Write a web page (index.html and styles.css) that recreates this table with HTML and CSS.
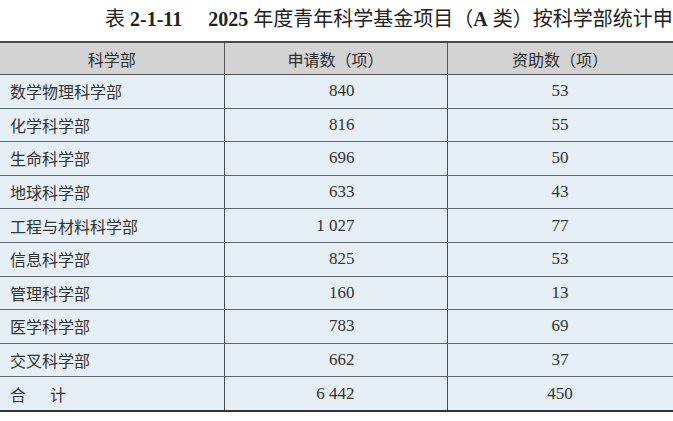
FILE: index.html
```html
<!DOCTYPE html>
<html lang="zh">
<head>
<meta charset="utf-8">
<title>表 2-1-11</title>
<link rel="stylesheet" href="styles.css">
</head>
<body>
<div class="page">
  <div class="title">表 <b>2-1-11</b><span class="gap"></span><b>2025</b> 年度青年科学基金项目（<b>A</b> 类）按科学部统计申请与资助情况</div>
  <table class="data">
    <colgroup><col class="c1"><col class="c2"><col class="c3"></colgroup>
    <thead>
      <tr><th>科学部</th><th>申请数（项）</th><th>资助数（项）</th></tr>
    </thead>
    <tbody>
      <tr><td class="name">数学物理科学部</td><td class="num">840</td><td class="fund">53</td></tr>
      <tr><td class="name">化学科学部</td><td class="num">816</td><td class="fund">55</td></tr>
      <tr><td class="name">生命科学部</td><td class="num">696</td><td class="fund">50</td></tr>
      <tr><td class="name">地球科学部</td><td class="num">633</td><td class="fund">43</td></tr>
      <tr><td class="name">工程与材料科学部</td><td class="num">1 027</td><td class="fund">77</td></tr>
      <tr><td class="name">信息科学部</td><td class="num">825</td><td class="fund">53</td></tr>
      <tr><td class="name">管理科学部</td><td class="num">160</td><td class="fund">13</td></tr>
      <tr><td class="name">医学科学部</td><td class="num">783</td><td class="fund">69</td></tr>
      <tr><td class="name">交叉科学部</td><td class="num">662</td><td class="fund">37</td></tr>
      <tr class="total"><td class="name">合<span class="sp"></span>计</td><td class="num">6 442</td><td class="fund">450</td></tr>
    </tbody>
  </table>
</div>
</body>
</html>
```
FILE: styles.css
```css
html, body {
  margin: 0;
  padding: 0;
  background: #ffffff;
}
.page {
  width: 673px;
  height: 421px;
  overflow: hidden;
  font-family: "Noto Sans CJK SC", sans-serif;
  color: #2a2a2a;
}
.title {
  height: 41px;
  box-sizing: border-box;
  padding: 6px 0 0 105px;
  font-size: 20px;
  line-height: 26px;
  white-space: nowrap;
  overflow: hidden;
  color: #222;
  font-family: "Liberation Serif", "Noto Sans CJK SC", serif;
}
.title b {
  font-family: "Liberation Serif", serif;
  font-weight: bold;
}
.title .gap {
  display: inline-block;
  width: 26px;
}
.data {
  width: 673px;
  border-collapse: collapse;
  table-layout: fixed;
  border-top: 2px solid #4a4a4a;
  border-bottom: 2px solid #333;
}
.c1 { width: 224px; }
.c2 { width: 223px; }
.c3 { width: 226px; }
.data th {
  height: 31px;
  padding: 0;
  background: #d3d3d3;
  font-weight: normal;
  font-size: 16px;
  color: #2e2e2e;
  border-bottom: 1px solid #555;
  border-right: 1px solid #555;
}
.data td {
  height: 32.6px;
  padding: 0;
  background: #e5eff5;
  font-size: 16px;
  border-bottom: 1px solid #5e686e;
  border-right: 1px solid #4a4a4a;
  color: #333;
}
.data th:last-child,
.data td:last-child {
  border-right: 1px solid #555;
}
.data tr.total td {
  border-bottom: none;
}
.name {
  padding-left: 10px !important;
  text-align: left;
  font-family: "Noto Sans CJK SC", sans-serif;
  color: #353535;
}
.name .sp {
  display: inline-block;
  width: 24px;
}
.num {
  text-align: right;
  padding-right: 92px !important;
  font-family: "Liberation Serif", serif;
  font-size: 17px !important;
}
.fund {
  text-align: center;
  font-family: "Liberation Serif", serif;
  font-size: 17px !important;
}
```
